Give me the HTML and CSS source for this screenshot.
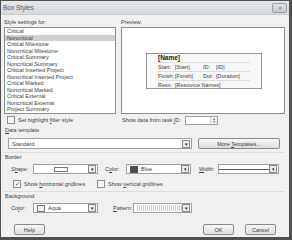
FILE: index.html
```html
<!DOCTYPE html>
<html lang="en">
<head>
    <meta charset="UTF-8">
    <meta name="viewport" content="width=device-width, initial-scale=1.0">
    <title>Box Styles</title>
    <link rel="stylesheet" href="styles.css">
</head>
<body>
    <div class="dialog">
        <div class="titlebar">
            <span class="title">Box Styles</span>
            <span class="close">&#x2715;</span>
        </div>

        <div class="content">
            <div class="top">
                <div class="col-left">
                    <div class="label">Style settings for:</div>
                    <ul class="listbox">
                        <li>Critical</li>
                        <li class="selected">Noncritical</li>
                        <li>Critical Milestone</li>
                        <li>Noncritical Milestone</li>
                        <li>Critical Summary</li>
                        <li>Noncritical Summary</li>
                        <li>Critical Inserted Project</li>
                        <li>Noncritical Inserted Project</li>
                        <li>Critical Marked</li>
                        <li>Noncritical Marked</li>
                        <li>Critical External</li>
                        <li>Noncritical External</li>
                        <li>Project Summary</li>
                    </ul>
                </div>
                <div class="col-right">
                    <div class="label">Preview:</div>
                    <div class="preview">
                        <div class="card">
                            <div class="card-name">[Name]</div>
                            <div class="card-row"><span>Start:</span><span>[Start]</span><span>ID:</span><span>[ID]</span></div>
                            <div class="card-row"><span>Finish:</span><span>[Finish]</span><span>Dur:</span><span>[Duration]</span></div>
                            <div class="card-row last"><span>Resx:</span><span class="wide">[Resource Names]</span></div>
                        </div>
                    </div>
                </div>
            </div>

            <div class="options">
                <label class="check"><span class="box"></span><span>Set highlight <u>f</u>ilter style</span></label>
                <div class="taskid">
                    <span>Show data from task <u>I</u>D:</span>
                    <span class="spin"><span class="spin-btns"><i>&#x25B4;</i><i>&#x25BE;</i></span></span>
                </div>
            </div>

            <div class="group-label"><u>D</u>ata template</div>
            <div class="template-row">
                <div class="combo template"><span class="combo-text">Standard</span><span class="drop">&#x25BE;</span></div>
                <button class="btn more">More <u>T</u>emplates...</button>
            </div>

            <div class="group-label sep">Border</div>
            <div class="field-row">
                <span class="field-label shape-label">S<u>h</u>ape:</span>
                <div class="combo small"><span class="combo-text center"><span class="shape-sample"></span></span><span class="drop">&#x25BE;</span></div>
                <span class="field-label color-label">C<u>o</u>lor:</span>
                <div class="combo small"><span class="combo-text"><span class="swatch blue"></span>Blue</span><span class="drop">&#x25BE;</span></div>
                <span class="field-label width-label"><u>W</u>idth:</span>
                <div class="combo width"><span class="combo-text center"><span class="line-sample"></span></span><span class="drop">&#x25BE;</span></div>
            </div>
            <div class="check-row">
                <label class="check"><span class="box checked">&#x2713;</span><span>Show <u>h</u>orizontal gridlines</span></label>
                <label class="check vert"><span class="box"></span><span>Show <u>v</u>ertical gridlines</span></label>
            </div>

            <div class="group-label sep">Background</div>
            <div class="field-row">
                <span class="field-label shape-label">Co<u>l</u>or:</span>
                <div class="combo small"><span class="combo-text"><span class="swatch aqua"></span>Aqua</span><span class="drop">&#x25BE;</span></div>
                <span class="field-label pattern-label"><u>P</u>attern:</span>
                <div class="combo pattern"><span class="combo-text"><span class="pattern-sample"></span></span><span class="drop">&#x25BE;</span></div>
            </div>

            <div class="footer">
                <button class="btn help">Help</button>
                <span class="spacer"></span>
                <button class="btn">OK</button>
                <button class="btn">Cancel</button>
            </div>
        </div>
    </div>
</body>
</html>
```

FILE: styles.css
```css
body { margin: 0; background: #fff; font-family: "Liberation Sans", Arial, sans-serif; font-size: 5.5px; color: #3c3c3c; }
u { text-decoration: underline; }
.dialog { width: 292px; height: 240px; box-sizing: border-box; border: 1px solid #505050; border-bottom-width: 3px; border-right-width: 3px; background: #f0f0f0; display: flex; flex-direction: column; }

.titlebar { height: 13px; display: flex; align-items: center; padding: 0 2px 0 2px; background: linear-gradient(#e6e8eb, #d6d9dd); border-bottom: 1px solid #c8cbd0; }
.title { font-size: 6.5px; color: #555; flex: 1; }
.close { width: 13px; height: 8px; border: 1px solid #9a9ea4; border-radius: 2px; background: linear-gradient(#e0e2e6, #c4c8ce); font-size: 5px; color: #666; display: flex; align-items: center; justify-content: center; }

.content { flex: 1; display: flex; flex-direction: column; padding: 0 4px 0 3px; }

.top { display: flex; gap: 5px; }
.label { height: 8px; padding-top: 4px; line-height: 7px; }
.col-left { width: 112px; }
.col-right { flex: 1; }
.listbox { list-style: none; margin: 0; padding: 0; height: 87px; box-sizing: border-box; background: #fff; border: 1px solid #8e8e8e; overflow: hidden; }
.listbox li { height: 6.5px; line-height: 6.5px; padding-left: 2px; }
.listbox li.selected { background: #cfcfcf; }

.preview { height: 87px; box-sizing: border-box; background: #fff; border: 1px solid #8e8e8e; display: flex; align-items: center; justify-content: center; padding-left: 2px; }
.card { width: 116px; height: 36px; box-sizing: border-box; border: 1px solid #999; background: #f8f8f8; padding: 0 11px; }
.card-name { height: 8px; line-height: 8px; font-weight: bold; font-size: 6.5px; color: #222; border-bottom: 1px solid #ddd; }
.card-row { display: grid; grid-template-columns: 17px 28px 13px auto; height: 8.3px; line-height: 8.3px; border-bottom: 1px solid #ddd; }
.card-row.last { border-bottom: none; }
.card-row .wide { grid-column: 2 / 5; }

.options { display: flex; align-items: center; height: 12px; }
.check { display: flex; align-items: center; gap: 3px; }
.box { width: 6px; height: 6px; border: 1px solid #8e8e8e; background: #f6f6f6; font-size: 6px; line-height: 6px; text-align: center; color: #444; }
.options .check { margin-left: 3px; width: 115px; }
.taskid { display: flex; align-items: center; gap: 4px; }
.spin { width: 33px; height: 9px; box-sizing: border-box; border: 1px solid #a0a0a0; background: #fff; display: flex; justify-content: flex-end; }
.spin-btns { width: 6px; display: flex; flex-direction: column; border-left: 1px solid #ccc; background: #f0f0f0; }
.spin-btns i { font-style: normal; font-size: 4px; line-height: 3.5px; text-align: center; color: #666; }

.group-label { height: 9px; line-height: 9px; padding-left: 1px; }
.group-label.sep { margin-top: 3px; border-top: 1px solid #dcdcdc; }

.template-row { display: flex; align-items: center; gap: 6px; padding-left: 4px; margin-top: 3px; height: 11px; }
.combo { height: 10px; box-sizing: border-box; border: 1px solid #a0a0a0; background: #fff; display: flex; align-items: center; }
.combo-text { flex: 1; display: flex; align-items: center; gap: 3px; padding-left: 3px; overflow: hidden; height: 100%; }
.combo-text.center { justify-content: center; padding-left: 0; }
.drop { width: 6px; height: 6px; margin-right: 1px; border: 1px solid #888; background: #eee; font-size: 5px; line-height: 6px; text-align: center; color: #222; }
.template { width: 184px; height: 11px; }
.btn { font-family: inherit; font-size: 5.5px; color: #3c3c3c; height: 11px; padding: 0; border: 1px solid #8a8a8a; border-radius: 2px; background: linear-gradient(#f6f6f6, #dedede); }
.more { width: 82px; }

.field-row { display: flex; align-items: center; height: 10px; margin-top: 2px; }
.field-label { padding-left: 7px; }
.shape-label { width: 22px; }
.color-label { width: 21px; }
.width-label { width: 19px; padding-left: 8px; }
.pattern-label { width: 20px; padding-left: 15px; }
.combo.small { width: 65px; }
.combo.width { width: 61px; }
.combo.pattern { width: 59px; }
.shape-sample { width: 12px; height: 3px; border: 1px solid #777; background: #fff; }
.line-sample { width: 50px; height: 0; border-top: 1px solid #666; }
.swatch { width: 6px; height: 5px; border: 1px solid #555; }
.swatch.blue { background: #444a5a; }
.swatch.aqua { background: #eeeeee; border-color: #777; }
.pattern-sample { width: 50px; height: 6px; background: repeating-linear-gradient(90deg, #bbb 0 1px, #fff 1px 2px), #fff; opacity: .8; }

.check-row { display: flex; align-items: center; height: 9px; margin-top: 5px; padding-left: 9px; }
.check-row .check { width: 84px; }

.footer { display: flex; align-items: center; gap: 11px; margin-top: auto; margin-bottom: 2px; padding: 0 9px 0 10px; }
.footer .btn { width: 31px; }
.spacer { flex: 1; }
```
